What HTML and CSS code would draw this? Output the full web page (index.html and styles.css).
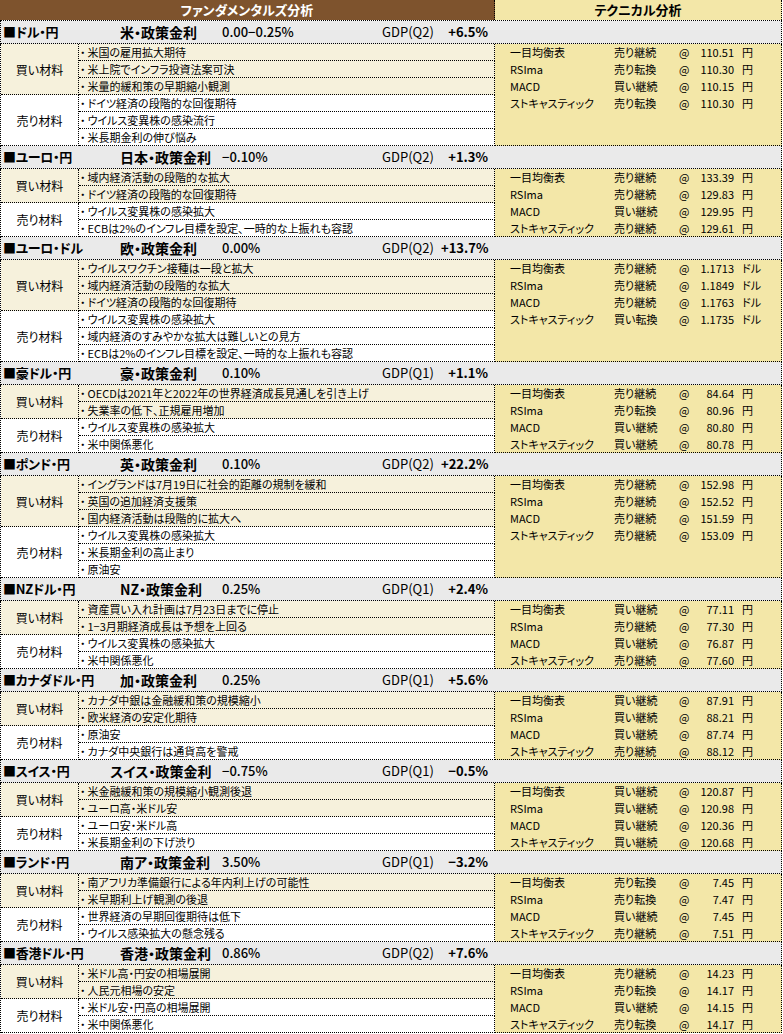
FILE: index.html
```html
<!DOCTYPE html>
<html lang="ja">
<head>
<meta charset="utf-8">
<title>ファンダメンタルズ分析 / テクニカル分析</title>
<link rel="stylesheet" href="styles.css">
</head>
<body>
<div class="sheet">
  <div class="top">
    <div class="top-fund">ファンダメンタルズ分析</div>
    <div class="top-tech">テクニカル分析</div>
  </div>

  <!-- 1 -->
  <section class="sec">
    <div class="head"><span class="pair">■ドル・円</span><span class="policy">米・政策金利</span><span class="rate">0.00−0.25%</span><span class="gdp">GDP(Q2)</span><span class="gval">+6.5%</span></div>
    <div class="body">
      <div class="groups">
        <div class="group buy"><div class="label">買い材料</div><ul class="items"><li><span class="dot">・</span>米国の雇用拡大期待</li><li><span class="dot">・</span>米上院でインフラ投資法案可決</li><li><span class="dot">・</span>米量的緩和策の早期縮小観測</li></ul></div>
        <div class="group sell"><div class="label">売り材料</div><ul class="items"><li><span class="dot">・</span>ドイツ経済の段階的な回復期待</li><li><span class="dot">・</span>ウイルス変異株の感染流行</li><li><span class="dot">・</span>米長期金利の伸び悩み</li></ul></div>
      </div>
      <div class="tech">
        <div class="trow"><span>一目均衡表</span><span>売り継続</span><span>@</span><span class="price">110.51</span><span class="unit">円</span></div>
        <div class="trow"><span>RSIma</span><span>売り転換</span><span>@</span><span class="price">110.30</span><span class="unit">円</span></div>
        <div class="trow"><span>MACD</span><span>買い継続</span><span>@</span><span class="price">110.15</span><span class="unit">円</span></div>
        <div class="trow"><span>ストキャスティック</span><span>売り転換</span><span>@</span><span class="price">110.30</span><span class="unit">円</span></div>
      </div>
    </div>
  </section>

  <!-- 2 -->
  <section class="sec">
    <div class="head"><span class="pair">■ユーロ・円</span><span class="policy">日本・政策金利</span><span class="rate">−0.10%</span><span class="gdp">GDP(Q2)</span><span class="gval">+1.3%</span></div>
    <div class="body">
      <div class="groups">
        <div class="group buy"><div class="label">買い材料</div><ul class="items"><li><span class="dot">・</span>域内経済活動の段階的な拡大</li><li><span class="dot">・</span>ドイツ経済の段階的な回復期待</li></ul></div>
        <div class="group sell"><div class="label">売り材料</div><ul class="items"><li><span class="dot">・</span>ウイルス変異株の感染拡大</li><li><span class="dot">・</span>ECBは2%のインフレ目標を設定、一時的な上振れも容認</li></ul></div>
      </div>
      <div class="tech">
        <div class="trow"><span>一目均衡表</span><span>売り継続</span><span>@</span><span class="price">133.39</span><span class="unit">円</span></div>
        <div class="trow"><span>RSIma</span><span>売り継続</span><span>@</span><span class="price">129.83</span><span class="unit">円</span></div>
        <div class="trow"><span>MACD</span><span>買い継続</span><span>@</span><span class="price">129.95</span><span class="unit">円</span></div>
        <div class="trow"><span>ストキャスティック</span><span>売り継続</span><span>@</span><span class="price">129.61</span><span class="unit">円</span></div>
      </div>
    </div>
  </section>

  <!-- 3 -->
  <section class="sec">
    <div class="head"><span class="pair">■ユーロ・ドル</span><span class="policy">欧・政策金利</span><span class="rate">0.00%</span><span class="gdp">GDP(Q2)</span><span class="gval">+13.7%</span></div>
    <div class="body">
      <div class="groups">
        <div class="group buy"><div class="label">買い材料</div><ul class="items"><li><span class="dot">・</span>ウイルスワクチン接種は一段と拡大</li><li><span class="dot">・</span>域内経済活動の段階的な拡大</li><li><span class="dot">・</span>ドイツ経済の段階的な回復期待</li></ul></div>
        <div class="group sell"><div class="label">売り材料</div><ul class="items"><li><span class="dot">・</span>ウイルス変異株の感染拡大</li><li><span class="dot">・</span>域内経済のすみやかな拡大は難しいとの見方</li><li><span class="dot">・</span>ECBは2%のインフレ目標を設定、一時的な上振れも容認</li></ul></div>
      </div>
      <div class="tech">
        <div class="trow"><span>一目均衡表</span><span>売り継続</span><span>@</span><span class="price">1.1713</span><span class="unit">ドル</span></div>
        <div class="trow"><span>RSIma</span><span>売り継続</span><span>@</span><span class="price">1.1849</span><span class="unit">ドル</span></div>
        <div class="trow"><span>MACD</span><span>売り継続</span><span>@</span><span class="price">1.1763</span><span class="unit">ドル</span></div>
        <div class="trow"><span>ストキャスティック</span><span>買い転換</span><span>@</span><span class="price">1.1735</span><span class="unit">ドル</span></div>
      </div>
    </div>
  </section>

  <!-- 4 -->
  <section class="sec">
    <div class="head"><span class="pair">■豪ドル・円</span><span class="policy">豪・政策金利</span><span class="rate">0.10%</span><span class="gdp">GDP(Q1)</span><span class="gval">+1.1%</span></div>
    <div class="body">
      <div class="groups">
        <div class="group buy"><div class="label">買い材料</div><ul class="items"><li><span class="dot">・</span>OECDは2021年と2022年の世界経済成長見通しを引き上げ</li><li><span class="dot">・</span>失業率の低下、正規雇用増加</li></ul></div>
        <div class="group sell"><div class="label">売り材料</div><ul class="items"><li><span class="dot">・</span>ウイルス変異株の感染拡大</li><li><span class="dot">・</span>米中関係悪化</li></ul></div>
      </div>
      <div class="tech">
        <div class="trow"><span>一目均衡表</span><span>売り継続</span><span>@</span><span class="price">84.64</span><span class="unit">円</span></div>
        <div class="trow"><span>RSIma</span><span>売り転換</span><span>@</span><span class="price">80.96</span><span class="unit">円</span></div>
        <div class="trow"><span>MACD</span><span>買い継続</span><span>@</span><span class="price">80.80</span><span class="unit">円</span></div>
        <div class="trow"><span>ストキャスティック</span><span>買い継続</span><span>@</span><span class="price">80.78</span><span class="unit">円</span></div>
      </div>
    </div>
  </section>

  <!-- 5 -->
  <section class="sec">
    <div class="head"><span class="pair">■ポンド・円</span><span class="policy">英・政策金利</span><span class="rate">0.10%</span><span class="gdp">GDP(Q2)</span><span class="gval">+22.2%</span></div>
    <div class="body">
      <div class="groups">
        <div class="group buy"><div class="label">買い材料</div><ul class="items"><li><span class="dot">・</span>イングランドは7月19日に社会的距離の規制を緩和</li><li><span class="dot">・</span>英国の追加経済支援策</li><li><span class="dot">・</span>国内経済活動は段階的に拡大へ</li></ul></div>
        <div class="group sell"><div class="label">売り材料</div><ul class="items"><li><span class="dot">・</span>ウイルス変異株の感染拡大</li><li><span class="dot">・</span>米長期金利の高止まり</li><li><span class="dot">・</span>原油安</li></ul></div>
      </div>
      <div class="tech">
        <div class="trow"><span>一目均衡表</span><span>売り継続</span><span>@</span><span class="price">152.98</span><span class="unit">円</span></div>
        <div class="trow"><span>RSIma</span><span>売り継続</span><span>@</span><span class="price">152.52</span><span class="unit">円</span></div>
        <div class="trow"><span>MACD</span><span>売り継続</span><span>@</span><span class="price">151.59</span><span class="unit">円</span></div>
        <div class="trow"><span>ストキャスティック</span><span>売り継続</span><span>@</span><span class="price">153.09</span><span class="unit">円</span></div>
      </div>
    </div>
  </section>

  <!-- 6 -->
  <section class="sec">
    <div class="head"><span class="pair">■NZドル・円</span><span class="policy">NZ・政策金利</span><span class="rate">0.25%</span><span class="gdp">GDP(Q1)</span><span class="gval">+2.4%</span></div>
    <div class="body">
      <div class="groups">
        <div class="group buy"><div class="label">買い材料</div><ul class="items"><li><span class="dot">・</span>資産買い入れ計画は7月23日までに停止</li><li><span class="dot">・</span>1−3月期経済成長は予想を上回る</li></ul></div>
        <div class="group sell"><div class="label">売り材料</div><ul class="items"><li><span class="dot">・</span>ウイルス変異株の感染拡大</li><li><span class="dot">・</span>米中関係悪化</li></ul></div>
      </div>
      <div class="tech">
        <div class="trow"><span>一目均衡表</span><span>買い継続</span><span>@</span><span class="price">77.11</span><span class="unit">円</span></div>
        <div class="trow"><span>RSIma</span><span>売り継続</span><span>@</span><span class="price">77.30</span><span class="unit">円</span></div>
        <div class="trow"><span>MACD</span><span>買い継続</span><span>@</span><span class="price">76.87</span><span class="unit">円</span></div>
        <div class="trow"><span>ストキャスティック</span><span>売り継続</span><span>@</span><span class="price">77.60</span><span class="unit">円</span></div>
      </div>
    </div>
  </section>

  <!-- 7 -->
  <section class="sec">
    <div class="head"><span class="pair">■カナダドル・円</span><span class="policy">加・政策金利</span><span class="rate">0.25%</span><span class="gdp">GDP(Q1)</span><span class="gval">+5.6%</span></div>
    <div class="body">
      <div class="groups">
        <div class="group buy"><div class="label">買い材料</div><ul class="items"><li><span class="dot">・</span>カナダ中銀は金融緩和策の規模縮小</li><li><span class="dot">・</span>欧米経済の安定化期待</li></ul></div>
        <div class="group sell"><div class="label">売り材料</div><ul class="items"><li><span class="dot">・</span>原油安</li><li><span class="dot">・</span>カナダ中央銀行は通貨高を警戒</li></ul></div>
      </div>
      <div class="tech">
        <div class="trow"><span>一目均衡表</span><span>買い継続</span><span>@</span><span class="price">87.91</span><span class="unit">円</span></div>
        <div class="trow"><span>RSIma</span><span>買い継続</span><span>@</span><span class="price">88.21</span><span class="unit">円</span></div>
        <div class="trow"><span>MACD</span><span>買い継続</span><span>@</span><span class="price">87.74</span><span class="unit">円</span></div>
        <div class="trow"><span>ストキャスティック</span><span>売り継続</span><span>@</span><span class="price">88.12</span><span class="unit">円</span></div>
      </div>
    </div>
  </section>

  <!-- 8 -->
  <section class="sec">
    <div class="head"><span class="pair">■スイス・円</span><span class="policy policy-long">スイス・政策金利</span><span class="rate">−0.75%</span><span class="gdp">GDP(Q1)</span><span class="gval">−0.5%</span></div>
    <div class="body">
      <div class="groups">
        <div class="group buy"><div class="label">買い材料</div><ul class="items"><li><span class="dot">・</span>米金融緩和策の規模縮小観測後退</li><li><span class="dot">・</span>ユーロ高・米ドル安</li></ul></div>
        <div class="group sell"><div class="label">売り材料</div><ul class="items"><li><span class="dot">・</span>ユーロ安・米ドル高</li><li><span class="dot">・</span>米長期金利の下げ渋り</li></ul></div>
      </div>
      <div class="tech">
        <div class="trow"><span>一目均衡表</span><span>買い継続</span><span>@</span><span class="price">120.87</span><span class="unit">円</span></div>
        <div class="trow"><span>RSIma</span><span>買い継続</span><span>@</span><span class="price">120.98</span><span class="unit">円</span></div>
        <div class="trow"><span>MACD</span><span>買い継続</span><span>@</span><span class="price">120.36</span><span class="unit">円</span></div>
        <div class="trow"><span>ストキャスティック</span><span>買い継続</span><span>@</span><span class="price">120.68</span><span class="unit">円</span></div>
      </div>
    </div>
  </section>

  <!-- 9 -->
  <section class="sec">
    <div class="head"><span class="pair">■ランド・円</span><span class="policy">南ア・政策金利</span><span class="rate">3.50%</span><span class="gdp">GDP(Q1)</span><span class="gval">−3.2%</span></div>
    <div class="body">
      <div class="groups">
        <div class="group buy"><div class="label">買い材料</div><ul class="items"><li><span class="dot">・</span>南アフリカ準備銀行による年内利上げの可能性</li><li><span class="dot">・</span>米早期利上げ観測の後退</li></ul></div>
        <div class="group sell"><div class="label">売り材料</div><ul class="items"><li><span class="dot">・</span>世界経済の早期回復期待は低下</li><li><span class="dot">・</span>ウイルス感染拡大の懸念残る</li></ul></div>
      </div>
      <div class="tech">
        <div class="trow"><span>一目均衡表</span><span>売り転換</span><span>@</span><span class="price">7.45</span><span class="unit">円</span></div>
        <div class="trow"><span>RSIma</span><span>売り転換</span><span>@</span><span class="price">7.47</span><span class="unit">円</span></div>
        <div class="trow"><span>MACD</span><span>買い継続</span><span>@</span><span class="price">7.45</span><span class="unit">円</span></div>
        <div class="trow"><span>ストキャスティック</span><span>売り継続</span><span>@</span><span class="price">7.51</span><span class="unit">円</span></div>
      </div>
    </div>
  </section>

  <!-- 10 -->
  <section class="sec">
    <div class="head"><span class="pair">■香港ドル・円</span><span class="policy">香港・政策金利</span><span class="rate">0.86%</span><span class="gdp">GDP(Q2)</span><span class="gval">+7.6%</span></div>
    <div class="body">
      <div class="groups">
        <div class="group buy"><div class="label">買い材料</div><ul class="items"><li><span class="dot">・</span>米ドル高・円安の相場展開</li><li><span class="dot">・</span>人民元相場の安定</li></ul></div>
        <div class="group sell"><div class="label">売り材料</div><ul class="items"><li><span class="dot">・</span>米ドル安・円高の相場展開</li><li><span class="dot">・</span>米中関係悪化</li></ul></div>
      </div>
      <div class="tech">
        <div class="trow"><span>一目均衡表</span><span>売り継続</span><span>@</span><span class="price">14.23</span><span class="unit">円</span></div>
        <div class="trow"><span>RSIma</span><span>売り転換</span><span>@</span><span class="price">14.17</span><span class="unit">円</span></div>
        <div class="trow"><span>MACD</span><span>買い継続</span><span>@</span><span class="price">14.15</span><span class="unit">円</span></div>
        <div class="trow"><span>ストキャスティック</span><span>売り転換</span><span>@</span><span class="price">14.17</span><span class="unit">円</span></div>
      </div>
    </div>
  </section>
</div>
</body>
</html>
```

FILE: styles.css
```css
* { box-sizing: border-box; }

html, body {
  margin: 0;
  padding: 0;
  background: #ffffff;
}

body {
  font-family: "Noto Sans CJK JP", "Noto Sans", sans-serif;
  font-feature-settings: "palt" 1;
  color: #000;
  font-size: 11px;
}

.sheet {
  width: 782px;
}

/* top header */
.top {
  display: flex;
  height: 21px;
  border-bottom: 1px dotted #000;
}

.top-fund {
  width: 495px;
  background: #7e532d;
  color: #fff;
  font-weight: 700;
  font-size: 13px;
  line-height: 20px;
  text-align: center;
  border-right: 1px dotted #000;
}

.top-tech {
  width: 287px;
  background: #f3e7a8;
  font-weight: 700;
  font-size: 13px;
  line-height: 20px;
  text-align: center;
  border-right: 1px dotted #000;
}

/* section header */
.head {
  display: grid;
  grid-template-columns: 117px 102px 160px 59px 47px;
  height: 23px;
  padding-left: 2px;
  background: #eaeaea;
  border-left: 1px dotted #000;
  border-right: 1px dotted #000;
  border-bottom: 1px dotted #000;
  line-height: 22px;
  white-space: nowrap;
  font-size: 13px;
}

.pair {
  font-weight: 700;
  font-size: 13px;
  letter-spacing: -0.3px;
}

.policy {
  font-weight: 700;
  font-size: 14px;
}

.policy-long {
  margin-left: -10px;
}

.rate {
  font-weight: 500;
}

.gdp {
  font-weight: 400;
}

.gval {
  font-weight: 700;
  text-align: right;
}

/* body */
.body {
  display: flex;
}

.groups {
  width: 495px;
  border-left: 1px dotted #000;
}

.group {
  display: flex;
}

.buy {
  background: #f6f1dc;
}

.sell {
  background: #ffffff;
}

.label {
  width: 78px;
  display: flex;
  align-items: center;
  justify-content: center;
  font-size: 12px;
  border-right: 1px dotted #000;
  border-bottom: 1px dotted #000;
}

.items {
  list-style: none;
  margin: 0;
  padding: 0;
  width: 416px;
}

.items li {
  height: 17px;
  line-height: 16px;
  padding-left: 1px;
  white-space: nowrap;
  overflow: hidden;
  border-right: 1px dotted #000;
  border-bottom: 1px dotted #000;
}

.dot {
  margin-right: 2px;
}

.tech {
  width: 287px;
  background: #f3e7a8;
  border-right: 1px dotted #000;
  border-bottom: 1px dotted #000;
  padding-left: 15px;
}

.trow {
  display: grid;
  grid-template-columns: 104px 65px 20px 35px auto;
  height: 17px;
  line-height: 16px;
  white-space: nowrap;
}

.trow:last-child {
  height: 16px;
}

.price {
  text-align: right;
}

.unit {
  padding-left: 8px;
}
```
